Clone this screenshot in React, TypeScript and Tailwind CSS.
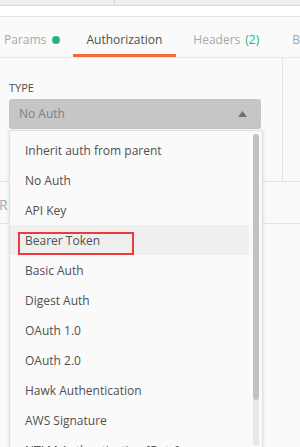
const items = [
  'Inherit auth from parent',
  'No Auth',
  'API Key',
  'Bearer Token',
  'Basic Auth',
  'Digest Auth',
  'OAuth 1.0',
  'OAuth 2.0',
  'Hawk Authentication',
  'AWS Signature',
  'NTLM Authentication [Beta]',
]

export default function App() {
  return (
    <div className="relative h-[447px] w-[300px] overflow-hidden bg-[#fafafa] font-['Open_Sans',sans-serif]">
      {/* top strip */}
      <div className="flex h-[6px] border-b border-[#dcdcdc] bg-[#f0f0f0]">
        <div className="w-[115px] border-r border-[#d4d4d4]" />
      </div>
      <div className="h-[11px] border-b border-[#e4e4e4] bg-white" />

      {/* tabs */}
      <div className="flex h-[41px] items-stretch border-b border-[#e8e8e8] bg-[#fafafa] pt-[5px] text-[12px] text-[#a8a8a8]">
        <div className="flex w-[74px] items-center gap-[6px] pl-[4px]">
          <span>Params</span>
          <span className="h-[8px] w-[8px] rounded-full bg-[#26b47f]" />
        </div>
        <div className="relative flex w-[106px] items-center justify-center text-[#505050]">
          Authorization
          <span className="absolute bottom-0 left-0 right-0 h-[3px] bg-[#f26b3a]" />
        </div>
        <div className="flex items-center pl-[17px]">
          Headers <span className="ml-[5px] text-[#26b47f]">(2)</span>
        </div>
        <div className="flex items-center pl-[33px]">B</div>
      </div>

      {/* body */}
      <div className="flex h-[124px] border-b border-[#e4e4e4]">
        <div className="w-[283px] border-r border-[#e4e4e4] pl-[9px] pr-[21px] pt-[23px]">
          <div className="text-[11px] leading-[14px] text-[#505050]">TYPE</div>
          <div className="mt-[4px] flex h-[30px] items-center justify-between rounded-[3px] bg-[#c6c6c6] pl-[10px] pr-[14px] text-[12px] text-[#808080]">
            <span>No Auth</span>
            <svg width="9" height="6" viewBox="0 0 9 6">
              <path d="M4.5 0 L9 6 L0 6 Z" fill="#707070" />
            </svg>
          </div>
        </div>
      </div>
      <div className="h-[42px] border-b border-[#e4e4e4] pt-[15px] text-[14px] leading-[16px] text-[#a8a8a8]">
        <span className="-ml-[1px]">R</span>
      </div>

      {/* dropdown menu */}
      <div className="absolute left-[9px] top-[130px] h-[340px] w-[254px] rounded-[2px] border border-[#e0e0e0] bg-[#fafafa] shadow-[0_1px_4px_rgba(0,0,0,0.12)]">
        <div className="pt-[4px] pr-[13px]">
          {items.map((item) => (
            <div
              key={item}
              className={`relative flex h-[30px] items-center pl-[15px] pt-[1px] text-[12px] text-[#505050] ${
                item === 'Bearer Token' ? 'bg-[#efefef]' : ''
              }`}
            >
              {item}
              {item === 'Bearer Token' && (
                <span className="absolute left-[8px] top-[7px] h-[23px] w-[116px] border-2 border-[#f03a3a]" />
              )}
            </div>
          ))}
        </div>
        {/* scrollbar */}
        <div className="absolute right-[3px] top-[3px] h-[312px] w-[6px] rounded-full bg-[#e8e8e8]">
          <div className="h-[266px] rounded-full bg-[#c2c2c2]" />
        </div>
      </div>
    </div>
  )
}
